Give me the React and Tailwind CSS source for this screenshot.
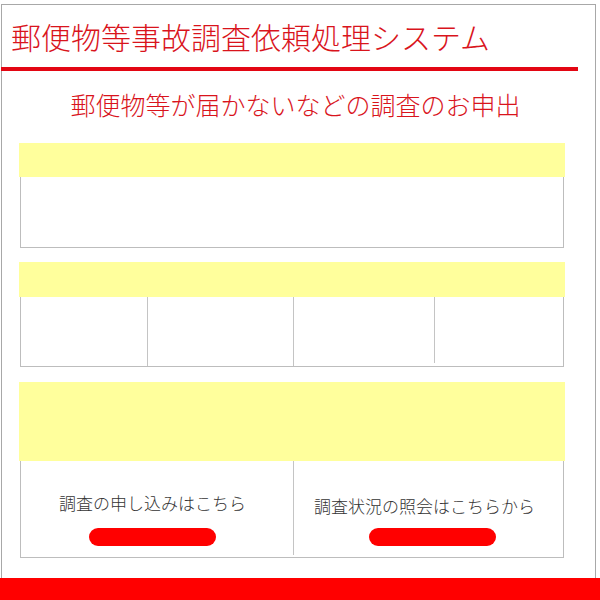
import React from 'react'

const font = { fontFamily: '"Noto Sans CJK JP", "Noto Sans", sans-serif' }

function YellowBar({ h }) {
  return <div className={`bg-[#ffff9c] ${h}`}></div>
}

export default function App() {
  return (
    <div className="w-[600px] h-[600px] bg-white flex flex-col overflow-hidden" style={font}>
      <div className="mt-[4px] ml-[1px] w-[595px] flex-1 border-t border-l border-r border-[#a8a8a8] flex flex-col">
        <h1 className="h-[62px] pl-[9px] pt-[14px] text-[30px] leading-[34px] font-light text-[#d9141c] tracking-[0px] whitespace-nowrap">
          郵便物等事故調査依頼処理システム
        </h1>
        <div className="-ml-px w-[577px] h-[4px] bg-[#e30613]"></div>

        <p className="mt-[18px] h-[30px] text-center text-[25px] leading-[30px] font-light text-[#d9141c] pr-[6px] whitespace-nowrap">
          郵便物等が届かないなどの調査のお申出
        </p>

        <div className="mt-[24px] ml-[17px] w-[546px]">
          <YellowBar h="h-[34px]" />
          <div className="h-[71px] mx-px border-l border-r border-b border-[#bdbdbd]"></div>
        </div>

        <div className="mt-[14px] ml-[17px] w-[546px]">
          <YellowBar h="h-[35px]" />
          <div className="h-[70px] mx-px border-l border-r border-b border-[#bdbdbd] flex">
            <div className="w-[127px] border-r border-[#c4c4c4]"></div>
            <div className="w-[146px] border-r border-[#c4c4c4]"></div>
            <div className="w-[141px] border-r border-[#c4c4c4] mb-[3px]"></div>
            <div className="flex-1"></div>
          </div>
        </div>

        <div className="mt-[15px] ml-[17px] w-[546px]">
          <YellowBar h="h-[79px]" />
          <div className="h-[97px] mx-px border-l border-r border-b border-[#bdbdbd] flex">
            <div className="w-[273px] pr-[9px] border-r border-[#c4c4c4] flex flex-col items-center mb-[2px]">
              <p className="mt-[30px] h-[24px] text-[17px] leading-[24px] text-[#333] font-light whitespace-nowrap">調査の申し込みはこちら</p>
              <button className="mt-[13px] w-[127px] h-[18px] rounded-full bg-[#ff0000]"></button>
            </div>
            <div className="flex-1 flex flex-col items-center">
              <p className="mt-[33px] mr-[8px] h-[24px] text-[17px] leading-[24px] text-[#333] font-light whitespace-nowrap">調査状況の照会はこちらから</p>
              <button className="mt-[10px] ml-[8px] w-[127px] h-[18px] rounded-full bg-[#ff0000]"></button>
            </div>
          </div>
        </div>
      </div>
      <div className="h-[22px] bg-[#ff0000]"></div>
    </div>
  )
}
